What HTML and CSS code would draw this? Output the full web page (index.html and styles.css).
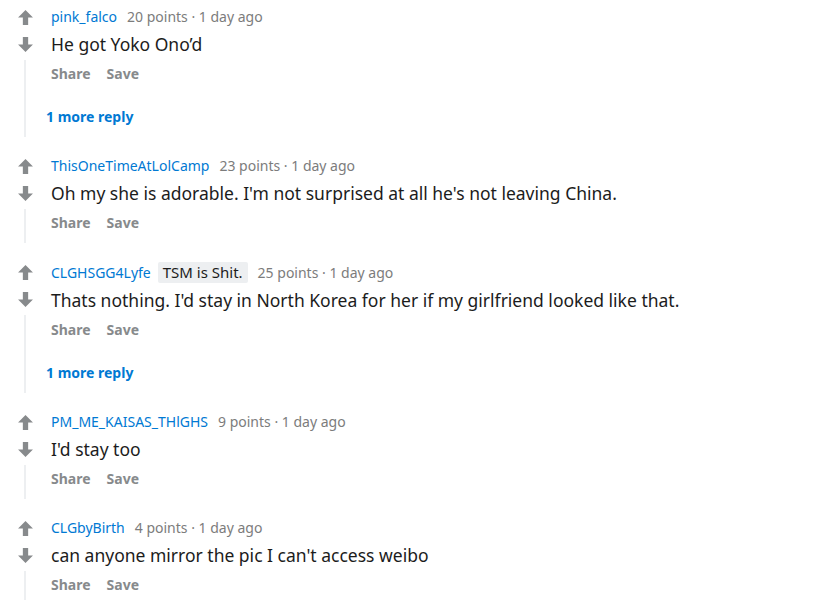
FILE: index.html
```html
<!DOCTYPE html>
<html lang="en">
<head>
  <meta charset="UTF-8">
  <title>Comments</title>
  <link rel="stylesheet" href="styles.css">
</head>
<body>

  <svg width="0" height="0" class="defs">
    <defs>
      <path id="arrow-up" d="M8 1 L15 8 H10.5 V15 H5.5 V8 H1 Z"/>
      <path id="arrow-down" d="M8 15 L15 8 H10.5 V1 H5.5 V8 H1 Z"/>
    </defs>
  </svg>

  <div class="comments">

    <div class="comment">
      <div class="vote-col">
        <svg class="vote" viewBox="0 0 16 16"><use href="#arrow-up"/></svg>
        <svg class="vote down" viewBox="0 0 16 16"><use href="#arrow-down"/></svg>
        <div class="thread"></div>
      </div>
      <div class="content">
        <div class="meta"><a class="user">pink_falco</a><span class="points">20 points · 1 day ago</span></div>
        <p class="body">He got Yoko Ono’d</p>
        <div class="actions"><span>Share</span><span>Save</span></div>
        <a class="more">1 more reply</a>
      </div>
    </div>

    <div class="comment">
      <div class="vote-col">
        <svg class="vote" viewBox="0 0 16 16"><use href="#arrow-up"/></svg>
        <svg class="vote down" viewBox="0 0 16 16"><use href="#arrow-down"/></svg>
        <div class="thread"></div>
      </div>
      <div class="content">
        <div class="meta"><a class="user">ThisOneTimeAtLolCamp</a><span class="points">23 points · 1 day ago</span></div>
        <p class="body">Oh my she is adorable. I'm not surprised at all he's not leaving China.</p>
        <div class="actions"><span>Share</span><span>Save</span></div>
      </div>
    </div>

    <div class="comment">
      <div class="vote-col">
        <svg class="vote" viewBox="0 0 16 16"><use href="#arrow-up"/></svg>
        <svg class="vote down" viewBox="0 0 16 16"><use href="#arrow-down"/></svg>
        <div class="thread"></div>
      </div>
      <div class="content">
        <div class="meta"><a class="user">CLGHSGG4Lyfe</a><span class="flair">TSM is Shit.</span><span class="points">25 points · 1 day ago</span></div>
        <p class="body">Thats nothing. I'd stay in North Korea for her if my girlfriend looked like that.</p>
        <div class="actions"><span>Share</span><span>Save</span></div>
        <a class="more">1 more reply</a>
      </div>
    </div>

    <div class="comment">
      <div class="vote-col">
        <svg class="vote" viewBox="0 0 16 16"><use href="#arrow-up"/></svg>
        <svg class="vote down" viewBox="0 0 16 16"><use href="#arrow-down"/></svg>
        <div class="thread"></div>
      </div>
      <div class="content">
        <div class="meta"><a class="user">PM_ME_KAISAS_THlGHS</a><span class="points">9 points · 1 day ago</span></div>
        <p class="body">I'd stay too</p>
        <div class="actions"><span>Share</span><span>Save</span></div>
      </div>
    </div>

    <div class="comment">
      <div class="vote-col">
        <svg class="vote" viewBox="0 0 16 16"><use href="#arrow-up"/></svg>
        <svg class="vote down" viewBox="0 0 16 16"><use href="#arrow-down"/></svg>
        <div class="thread"></div>
      </div>
      <div class="content">
        <div class="meta"><a class="user">CLGbyBirth</a><span class="points">4 points · 1 day ago</span></div>
        <p class="body">can anyone mirror the pic I can't access weibo</p>
        <div class="actions"><span>Share</span><span>Save</span></div>
      </div>
    </div>

  </div>

</body>
</html>
```

FILE: styles.css
```css
body {
  margin: 0;
  background-color: #fff;
  font-family: "Noto Sans", "Open Sans", sans-serif;
  color: #1c1c1c;
}

.defs {
  position: absolute;
}

.comments {
  padding-left: 15px;
}

.comment {
  display: flex;
  padding-top: 7px;
  margin-bottom: 12px;
}

/* vote arrows + thread line */
.vote-col {
  width: 20px;
  display: flex;
  flex-direction: column;
  align-items: center;
  padding-top: 2px;
}

.vote {
  width: 17px;
  height: 17px;
  fill: #878a8c;
  flex-shrink: 0;
}

.vote.down {
  margin-top: 10px;
}

.thread {
  flex: 1;
  width: 2px;
  margin-top: 7px;
  background-color: #edeff1;
}

.content {
  margin-left: 16px;
  padding-bottom: 11px;
  display: flex;
  flex-direction: column;
  align-items: flex-start;
}

.meta {
  display: flex;
  align-items: center;
  font-size: 14px;
  line-height: 20px;
}

.user {
  color: #0079d3;
  margin-right: 10px;
}

.points {
  color: #7c7c7c;
}

.flair {
  background-color: #edeff1;
  color: #1c1c1c;
  font-size: 15px;
  padding: 0 5px;
  border-radius: 2px;
  line-height: 21px;
  margin-left: -3px;
  margin-right: 10px;
}

.body {
  margin: 4px 0 0;
  font-size: 17.5px;
  line-height: 26px;
}

.actions {
  margin-top: 8px;
  display: flex;
  gap: 16px;
  font-size: 14px;
  font-weight: bold;
  line-height: 18px;
  color: #878a8c;
}

.more {
  margin-top: 25px;
  margin-left: -5px;
  font-size: 14px;
  font-weight: bold;
  line-height: 18px;
  color: #0079d3;
}
```
